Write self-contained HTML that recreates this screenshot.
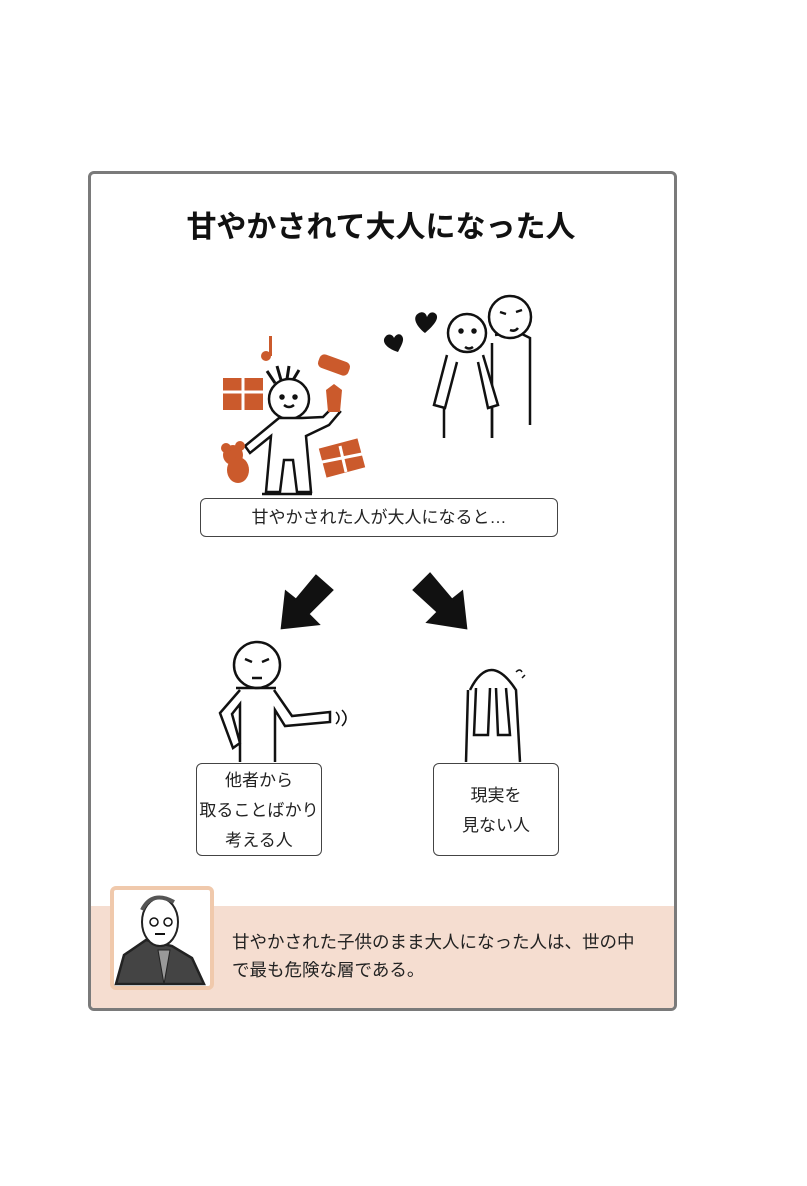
<!DOCTYPE html>
<html><head><meta charset="utf-8"><style>
body{margin:0;width:807px;height:1186px;background:#fff;position:relative;font-family:"Liberation Sans","Noto Sans CJK JP",sans-serif;overflow:hidden}
.frame{position:absolute;left:88px;top:171px;width:583px;height:834px;border:3px solid #7a7a7a;border-radius:6px;overflow:hidden;background:#fff}
.band{position:absolute;left:0;right:0;top:732px;bottom:0;background:#f5ddd0}
.title{position:absolute;left:0;width:762px;top:202px;text-align:center;font-size:30px;font-weight:bold;color:#111;letter-spacing:0px}
.box{position:absolute;border:1.5px solid #444;border-radius:6px;background:#fff;text-align:center;color:#222;font-size:17px}
.portrait{position:absolute;left:110px;top:886px;width:96px;height:96px;border:4px solid #f0c9ac;border-radius:6px;background:#fff}
.quote{position:absolute;left:232px;top:928px;font-size:17.5px;line-height:28px;color:#222}
svg{position:absolute;left:0;top:0}
</style></head><body>
<div class="frame"><div class="band"></div></div>
<div class="title">甘やかされて大人になった人</div>
<svg width="807" height="1186" fill="none" stroke="#111" stroke-width="2.5">
<defs><pattern id="h" width="5" height="5" patternUnits="userSpaceOnUse" patternTransform="rotate(45)"><rect width="5" height="5" fill="#fff"/><rect width="3" height="5" fill="#111"/></pattern></defs>
<!-- child -->
<circle cx="289" cy="399" r="20" fill="#fff"/>
<path d="M275 383 l-8 -12 M281 380 l-4 -14 M287 379 l2 -13 M293 380 l6 -10" stroke-width="3"/>
<circle cx="282" cy="397" r="1.5" fill="#111"/><circle cx="295" cy="397" r="1.5" fill="#111"/>
<path d="M284 405 q5 4 10 0"/>
<path d="M279 418 L245 446 L250 453 L271 436 L266 492 L280 492 L284 460 L293 460 L297 492 L311 492 L306 436 L329 425 L340 412 L333 407 L323 417 L302 418 Z" fill="#fff"/>
<path d="M262 494 h50" />
<g fill="#cb5a2c" stroke="none">
<rect x="223" y="378" width="40" height="32" /><rect x="322" y="443" width="40" height="30" transform="rotate(-15 342 458)"/>
<rect x="318" y="358" width="32" height="14" rx="5" transform="rotate(20 334 365)"/>
<path d="M326 390 l8 -6 l8 6 l-2 22 h-12 z"/>
<circle cx="233" cy="455" r="10"/><circle cx="226" cy="448" r="5"/><circle cx="240" cy="446" r="5"/>
<ellipse cx="238" cy="470" rx="11" ry="13"/>
<circle cx="266" cy="356" r="5"/><rect x="269" y="336" width="3" height="20"/>
</g>
<g stroke="#fff" stroke-width="3"><path d="M243 378 v32 M223 392 h40 M340 446 l6 26 M322 462 l40 -8"/></g>
<path d="M425 333 c-8 -6 -14 -16 -6 -20 c4 -2 7 0 8 4 c2 -5 6 -6 9 -3 c4 5 -4 13 -11 19z" fill="#111" stroke="none"/>
<path d="M398 352 c-10 -3 -18 -10 -12 -16 c3 -3 7 -1 8 2 c2 -4 6 -5 8 -2 c3 4 -1 10 -4 16z" fill="#111" stroke="none"/>
<path d="M495 335 L518 332 L530 338 V425 M492 343 V438" fill="#fff"/>
<circle cx="510" cy="317" r="21" fill="#fff"/>
<path d="M500 312 l6 2 M516 312 l6 -2 M510 330 q5 2 8 -2"/>
<circle cx="467" cy="333" r="19" fill="#fff"/>
<circle cx="461" cy="331" r="1.5" fill="#111"/><circle cx="474" cy="331" r="1.5" fill="#111"/>
<path d="M465 347 q4 3 8 0"/>
<path d="M447 355 L434 405 L445 408 L457 362 M483 355 L498 405 L488 408 L478 362" fill="#fff"/>
<path d="M444 408 V438 M492 408 V438"/>
<g fill="url(#h)" stroke="#111" stroke-width="2.5">
<path d="M316 576 L332 590 L308 614 L318 624 L282 628 L286 592 L296 600 Z"/>
<path d="M430 574 L414 590 L438 612 L428 622 L466 628 L462 592 L452 600 Z"/>
</g>
<circle cx="257" cy="665" r="23" fill="#fff"/>
<path d="M245 659 l7 3 M262 662 l7 -3 M252 678 h10"/>
<path d="M240 690 L220 713 L233 748 L240 743 L232 714 L240 704 V762 M274 690 L292 716 L330 712 L330 722 L285 726 L275 710 V762" fill="#fff"/>
<path d="M236 688 h40" />
<path d="M336 712 q6 6 0 12 M342 710 q8 8 0 16" stroke-width="1.5"/>
<path d="M470 690 q20 -40 46 0 L520 762 M468 690 L466 762" fill="#fff"/>
<path d="M476 688 L474 735 L488 735 L490 688 M496 688 L498 735 L510 735 L506 688" fill="#fff"/>
<path d="M516 672 q4 -4 6 0 M522 678 l3 -3" stroke-width="1.5"/>
</svg>
<div class="box" style="left:200px;top:498px;width:356px;height:37px;line-height:37px">甘やかされた人が大人になると…</div>
<div class="box" style="left:196px;top:763px;width:126px;height:93px;line-height:30px;padding-top:2px;box-sizing:border-box">他者から<br>取ることばかり<br>考える人</div>
<div class="box" style="left:433px;top:763px;width:126px;height:93px;line-height:30px;padding-top:17px;box-sizing:border-box">現実を<br>見ない人</div>
<div class="portrait"></div>
<svg width="807" height="1186" fill="none" stroke="#111" stroke-width="2.5">
<path d="M116 984 L124 955 L146 940 L172 946 L192 958 L204 984 Z" fill="#444" stroke="#222"/>
<path d="M158 950 L164 984 L170 950 Z" fill="#999" stroke="#222" stroke-width="1"/>
<ellipse cx="160" cy="922" rx="18" ry="24" fill="#fff" stroke="#222" stroke-width="2"/>
<circle cx="154" cy="922" r="4" stroke-width="1.5"/><circle cx="168" cy="922" r="4" stroke-width="1.5"/>
<path d="M142 910 q10 -20 32 -8" stroke="#555" stroke-width="4"/>
<path d="M155 934 h10" stroke-width="2"/>
</svg>
<div class="quote">甘やかされた子供のまま大人になった人は、世の中<br>で最も危険な層である。</div>
</body></html>
